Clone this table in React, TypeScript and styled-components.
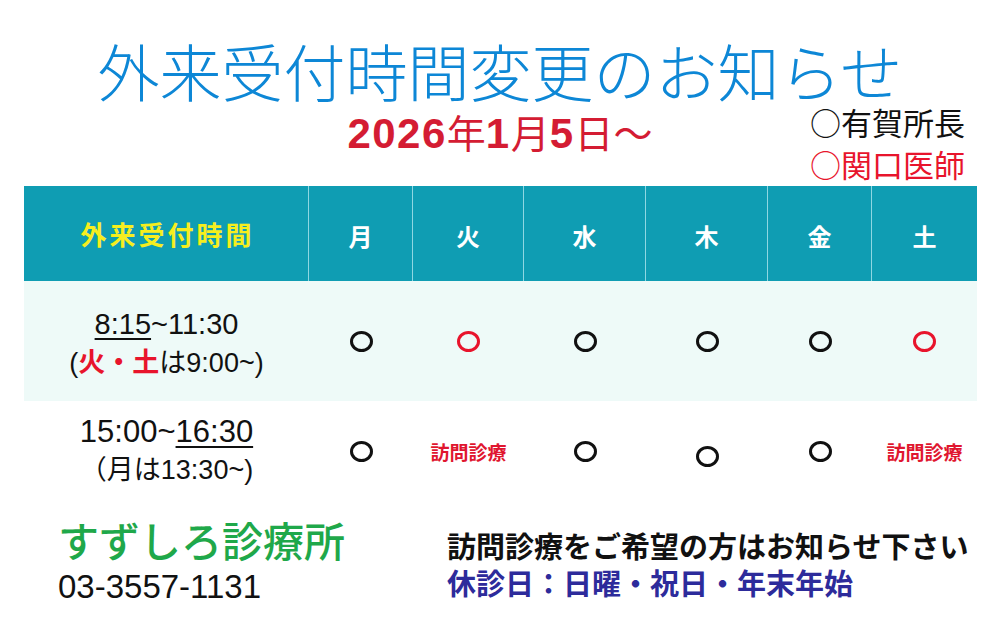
import styled, { createGlobalStyle } from 'styled-components';

const GlobalStyle = createGlobalStyle`
  html, body {
    margin: 0;
    padding: 0;
    background: #ffffff;
  }
`;

const JP = `"Noto Sans CJK JP", "Noto Sans", sans-serif`;
const NUM = `"Liberation Sans", "Noto Sans CJK JP", sans-serif`;

const days = ['月', '火', '水', '木', '金', '土'];

type Mark = { kind: 'circle'; color: string; drop?: boolean } | { kind: 'visit' };

const morning: Mark[] = [
  { kind: 'circle', color: '#111' },
  { kind: 'circle', color: '#e8142c' },
  { kind: 'circle', color: '#111' },
  { kind: 'circle', color: '#111' },
  { kind: 'circle', color: '#111' },
  { kind: 'circle', color: '#e8142c' },
];

const afternoon: Mark[] = [
  { kind: 'circle', color: '#111' },
  { kind: 'visit' },
  { kind: 'circle', color: '#111' },
  { kind: 'circle', color: '#111', drop: true },
  { kind: 'circle', color: '#111' },
  { kind: 'visit' },
];

function renderMark(m: Mark) {
  if (m.kind === 'visit') return <Visit>訪問診療</Visit>;
  return <Circle $color={m.color} $drop={m.drop} />;
}

export default function App() {
  return (
    <>
      <GlobalStyle />
      <Page>
        <Title>外来受付時間変更のお知らせ</Title>

        <SubRow>
          <span />
          <DateLine>
            <Num>2026</Num>
            <Kanji>年</Kanji>
            <Num>1</Num>
            <Kanji>月</Kanji>
            <Num>5</Num>
            <Kanji>日～</Kanji>
          </DateLine>
          <Staff>
            <StaffLine $color="#111">○有賀所長</StaffLine>
            <StaffLine $color="#e8142c">○関口医師</StaffLine>
          </Staff>
        </SubRow>

        <Table>
          <HeadCell>
            <HeadLabel>外来受付時間</HeadLabel>
          </HeadCell>
          {days.map((d, i) => (
            <HeadCell key={d} $last={i === days.length - 1}>
              <DayLabel>{d}</DayLabel>
            </HeadCell>
          ))}

          <TimeCell $tint>
            <TimeMain>
              <U>8:15</U>~11:30
            </TimeMain>
            <TimeNote>
              (<Red>火・土</Red>は9:00~)
            </TimeNote>
          </TimeCell>
          {morning.map((m, i) => (
            <MarkCell key={'m' + i} $tint>
              {renderMark(m)}
            </MarkCell>
          ))}

          <TimeCell>
            <TimeMain $big>
              15:00~<U>16:30</U>
            </TimeMain>
            <TimeNote>（月は13:30~)</TimeNote>
          </TimeCell>
          {afternoon.map((m, i) => (
            <MarkCell key={'a' + i}>{renderMark(m)}</MarkCell>
          ))}
        </Table>

        <Footer>
          <Clinic>
            <ClinicName>すずしろ診療所</ClinicName>
            <Phone>03-3557-1131</Phone>
          </Clinic>
          <Notes>
            <NoteLine $color="#111">訪問診療をご希望の方はお知らせ下さい</NoteLine>
            <NoteLine $color="#2d2b9b">休診日：日曜・祝日・年末年始</NoteLine>
          </Notes>
        </Footer>
      </Page>
    </>
  );
}

// Styles
const Page = styled.div`
  width: 1000px;
  height: 639px;
  overflow: hidden;
  background: #ffffff;
  box-sizing: border-box;
  padding-top: 40px;
`;

const Title = styled.h1`
  margin: 0;
  text-align: center;
  font-family: ${JP};
  font-weight: 300;
  font-size: 62px;
  line-height: 61px;
  color: #0d87d6;
  white-space: nowrap;
`;

const SubRow = styled.div`
  display: grid;
  grid-template-columns: 1fr auto 1fr;
  align-items: start;
  height: 85px;
`;

const DateLine = styled.div`
  margin-top: 8px;
  color: #d41c33;
  line-height: 44px;
  white-space: nowrap;
`;

const Num = styled.span`
  font-family: ${NUM};
  font-weight: 700;
  font-size: 42px;
  letter-spacing: 1.5px;
`;

const Kanji = styled.span`
  font-family: ${JP};
  font-weight: 400;
  font-size: 39px;
`;

const Staff = styled.div`
  justify-self: end;
  padding-right: 35px;
  display: flex;
  flex-direction: column;
`;

const StaffLine = styled.div<{ $color: string }>`
  font-family: ${JP};
  font-size: 31px;
  line-height: 42px;
  color: ${(p) => p.$color};
  white-space: nowrap;
`;

const Table = styled.div`
  margin-left: 24px;
  width: 953px;
  display: grid;
  grid-template-columns: 285px 104px 111px 122px 122px 104px 105px;
  grid-template-rows: 95px 120px 100px;
`;

const HeadCell = styled.div<{ $last?: boolean }>`
  background: #0f9db3;
  display: flex;
  align-items: center;
  justify-content: center;
  border-right: ${(p) => (p.$last ? 'none' : '1.5px solid #8fd7e2')};
  box-sizing: border-box;
`;

const HeadLabel = styled.span`
  font-family: ${JP};
  font-weight: 700;
  font-size: 26px;
  letter-spacing: 3px;
  color: #f6ee1e;
  padding-left: 3px;
`;

const DayLabel = styled.span`
  font-family: ${JP};
  font-weight: 700;
  font-size: 24px;
  color: #ffffff;
  padding-top: 4px;
`;

const TimeCell = styled.div<{ $tint?: boolean }>`
  background: ${(p) => (p.$tint ? '#eefaf8' : '#ffffff')};
  display: flex;
  flex-direction: column;
  align-items: center;
  justify-content: center;
  padding-top: ${(p) => (p.$tint ? '6px' : '0')};
  box-sizing: border-box;
  font-family: ${NUM};
  color: #111;
`;

const TimeMain = styled.div<{ $big?: boolean }>`
  font-size: ${(p) => (p.$big ? '31px' : '29px')};
  line-height: 39px;
  white-space: nowrap;
`;

const TimeNote = styled.div`
  font-size: 27px;
  line-height: 39px;
  white-space: nowrap;
`;

const U = styled.span`
  text-decoration: underline;
  text-decoration-thickness: 2px;
  text-underline-offset: 4px;
`;

const Red = styled.span`
  color: #e8142c;
  font-weight: 700;
`;

const MarkCell = styled.div<{ $tint?: boolean }>`
  background: ${(p) => (p.$tint ? '#eefaf8' : '#ffffff')};
  display: flex;
  align-items: center;
  justify-content: center;
`;

const Circle = styled.span<{ $color: string; $drop?: boolean }>`
  display: block;
  width: 23px;
  height: 21px;
  box-sizing: border-box;
  border: 3px solid ${(p) => p.$color};
  border-radius: 50%;
  margin-top: ${(p) => (p.$drop ? '10px' : '0')};
`;

const Visit = styled.span`
  font-family: ${JP};
  font-weight: 700;
  font-size: 19px;
  color: #e0162f;
  white-space: nowrap;
`;

const Footer = styled.div`
  display: grid;
  grid-template-columns: 389px 1fr;
  padding-left: 58px;
`;

const Clinic = styled.div`
  padding-top: 16px;
  display: flex;
  flex-direction: column;
`;

const ClinicName = styled.div`
  font-family: ${JP};
  font-weight: 500;
  font-size: 41px;
  line-height: 44px;
  color: #1fa84a;
  white-space: nowrap;
`;

const Phone = styled.div`
  margin-top: 8px;
  font-family: ${NUM};
  font-size: 33px;
  line-height: 36px;
  color: #111;
`;

const Notes = styled.div`
  padding-top: 26px;
  display: flex;
  flex-direction: column;
`;

const NoteLine = styled.div<{ $color: string }>`
  font-family: ${JP};
  font-weight: 700;
  font-size: 29px;
  line-height: 37px;
  color: ${(p) => p.$color};
  white-space: nowrap;
`;
